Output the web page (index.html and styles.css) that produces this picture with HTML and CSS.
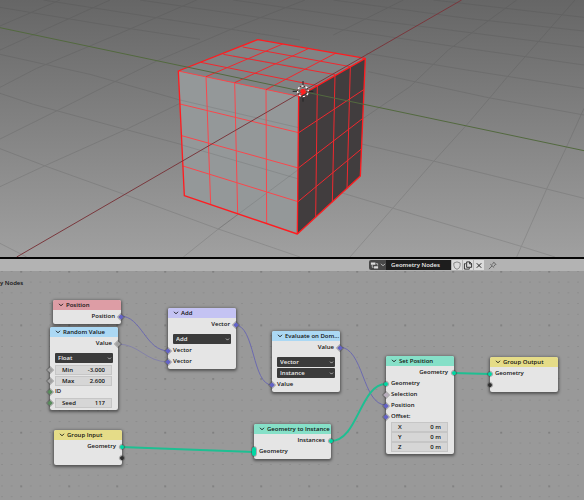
FILE: index.html
```
<!DOCTYPE html>
<html lang="en">
<head>
<meta charset="utf-8">
<title>Geometry Nodes</title>
<link rel="stylesheet" href="styles.css">
</head>
<body>
<svg class="defs" aria-hidden="true">
  <symbol id="chev" viewBox="0 0 6 4"><path d="M1 .8 3 2.8 5 .8" fill="none" stroke="currentColor" stroke-width=".9"/></symbol>
</svg>

<section class="viewport" aria-label="3D viewport">
  <svg class="scene" viewBox="0 0 1752 771" preserveAspectRatio="xMidYMid slice">
    <g class="floor">
      <path d="M0 446 133 497 375 584 655 687 900 771M0 280 100 313 375 388 550 435 900 540 1030 580 1180 625 1560 738 1665 771M0 163 270 223 540 300 900 383 1085 432 1300 483 1640 567 1752 595M0 22 300 72 600 118M1100 160 1400 210 1752 265M1105 215 1465 293 1752 345M130 0 500 58 900 120M420 0 900 70 1400 145 1752 195M700 0 1100 58 1752 142M1000 0 1400 55 1752 93M1300 0 1752 52M0 730 80 771"/>
      <path d="M0 560 135 497 385 385 540 310 800 190M1000 105 1210 0M550 771 655 687 900 505 1090 355 1230 260 1345 150 1550 0M1050 771 1178 625 1302 483 1398 377 1470 293 1520 233 1725 0M1550 771 1640 567 1700 440 1752 325M0 417 175 330 320 257 470 183 700 85 915 0M0 262 110 205 360 100 590 0M0 150 330 0M0 78 180 0"/>
    </g>
    <g transform="translate(480 60)">
      <path class="face-front" d="M55 153 416 229 412 642 73 527Z"/>
      <path class="face-top" d="M55 153 293 59 616 115 416 229Z"/>
      <path class="face-side" d="M416 229 616 115 601 468 412 642Z"/>
      <g class="floor faint">
        <path d="M60 240 416 323M66 375 416 477M175 627 416 448M220 108 430 145"/>
      </g>
      <g class="edge-soft">
        <path d="M60 252 416 338M65 347 415 444M69 438 414 545M138 170 152 552M224 188 233 581M318 209 320 610M55 153 416 229"/>
      </g>
      <g class="edge">
        <path d="M248 81 571 140M190 103 525 164M122 127 472 197M368 72 138 170M445 86 224 188M528 99 318 209"/>
        <path d="M416 338 611 209M415 444 606 297M414 545 604 387M472 197 467 592M525 164 517 547M571 140 561 507"/>
        <path class="rim" d="M416 229 412 642 73 527 55 153 293 59 616 115 601 468 412 642M416 229 616 115"/>
      </g>
    </g>
    <path class="axis-y" d="M0 83 1752 452"/>
    <path class="axis-x" d="M50 771 905 276 1385 0"/>
    <g class="cursor3d">
      <path d="M909 243V263M909 285V305M878 274H898M920 274H940"/>
      <circle class="ring" cx="909" cy="274" r="16"/>
      <circle class="dash" cx="909" cy="274" r="16"/>
      <circle class="origin" cx="909" cy="274" r="8"/>
    </g>
  </svg>
</section>

<header class="bar">
  <button class="browse" aria-label="Browse node trees">
    <svg viewBox="0 0 10 9"><path d="M1 1.200h5v2.600H1zM4.500 5.200H9v2.600H4.500z" fill="#ddd"/><path d="M2.500 4v2.500H4M6.500 2.500h2V4.500" fill="none" stroke="#ddd" stroke-width=".8"/></svg>
    <svg class="chev"><use href="#chev"/></svg>
  </button>
  <input class="tree" aria-label="Node tree name" value="Geometry Nodes">
  <div class="tools">
    <button aria-label="Fake user"><svg viewBox="0 0 11 10"><path d="M5.500 1 9 2.200V5Q9 8 5.500 9.300 2 8 2 5V2.200Z" fill="none" stroke="#777" stroke-width=".9"/></svg></button>
    <button aria-label="Duplicate"><svg viewBox="0 0 11 10"><path d="M4 1h3.500L9.500 3V7H4zM7.300 1v2.200h2.200M3 3H1.500V9H7V8" fill="none" stroke="#222"/></svg></button>
    <button aria-label="Unlink"><svg viewBox="0 0 11 10"><path d="m3 2.500 5 5M8 2.500l-5 5" stroke="#222" stroke-width="1.100"/></svg></button>
  </div>
  <button class="pin" aria-label="Pin"><svg viewBox="0 0 11 10"><path d="m6.500 1 3 3M7 1.500 5 4M9 3.500 7 6M3 3.500l4.300 3.800M5 5.500 1.500 9" fill="none" stroke="#555" stroke-width=".9"/></svg></button>
</header>

<main class="canvas">
  <svg class="dots" aria-hidden="true">
    <defs>
      <pattern id="minor" x="16.400" y="-5" width="9.600" height="10.730" patternUnits="userSpaceOnUse"><circle cx="4.800" cy="5.360" r=".6" fill="#7e7e7e"/></pattern>
      <pattern id="major" x="-2.800" y="-26" width="48" height="53.650" patternUnits="userSpaceOnUse"><circle cx="24" cy="26.800" r=".8" fill="#6c6c6c"/></pattern>
    </defs>
    <rect width="100%" height="100%" fill="url(#minor)"/>
    <rect width="100%" height="100%" fill="url(#major)"/>
  </svg>
  <p class="crumb">y Nodes</p>
  <svg class="wires" viewBox="0 271 584 229" width="584" height="229">
    <g class="vec">
      <path d="M120 316C142 316 145 351 169 351"/>
      <path class="val" d="M117 344C140 344 145 362 169 362"/>
      <path d="M235 325C255 325 252 385 272 385"/>
      <path d="M339 347C364 347 362 405 386 405"/>
    </g>
    <g class="geo">
      <path d="M121 447 254 452"/>
      <path d="M331 441C358 441 360 384 386 384"/>
      <path d="M453 373 490 374"/>
    </g>
  </svg>

  <article class="node n-position">
    <h2 class="red"><svg class="chev"><use href="#chev"/></svg>Position</h2>
    <div class="row out"><i class="sock vector"></i>Position</div>
  </article>

  <article class="node n-random">
    <h2 class="blue"><svg class="chev"><use href="#chev"/></svg>Random Value</h2>
    <div class="row out"><i class="sock float"></i>Value</div>
    <div class="pick first"><select aria-label="Data type"><option>Float</option></select><svg class="chev"><use href="#chev"/></svg></div>
    <div class="row"><i class="sock float"></i><label class="num">Min<input value="-3.000"></label></div>
    <div class="row"><i class="sock float"></i><label class="num">Max<input value="2.600"></label></div>
    <div class="row"><i class="sock int"></i>ID</div>
    <div class="row"><i class="sock int"></i><label class="num">Seed<input value="117"></label></div>
  </article>

  <article class="node n-add">
    <h2 class="violet"><svg class="chev"><use href="#chev"/></svg>Add</h2>
    <div class="row out"><i class="sock vector"></i>Vector</div>
    <div class="pick first"><select aria-label="Operation"><option>Add</option></select><svg class="chev"><use href="#chev"/></svg></div>
    <div class="row"><i class="sock vector"></i>Vector</div>
    <div class="row"><i class="sock vector"></i>Vector</div>
  </article>

  <article class="node n-evaluate">
    <h2 class="blue"><svg class="chev"><use href="#chev"/></svg>Evaluate on Dom...</h2>
    <div class="row out"><i class="sock vector"></i>Value</div>
    <div class="pick first"><select aria-label="Data type"><option>Vector</option></select><svg class="chev"><use href="#chev"/></svg></div>
    <div class="pick"><select aria-label="Domain"><option>Instance</option></select><svg class="chev"><use href="#chev"/></svg></div>
    <div class="row"><i class="sock vector"></i>Value</div>
  </article>

  <article class="node n-instance">
    <h2 class="green"><svg class="chev"><use href="#chev"/></svg>Geometry to Instance</h2>
    <div class="row out"><i class="sock geometry"></i>Instances</div>
    <div class="row"><i class="sock geometry multi"></i>Geometry</div>
  </article>

  <article class="node n-setpos">
    <h2 class="green"><svg class="chev"><use href="#chev"/></svg>Set Position</h2>
    <div class="row out"><i class="sock geometry"></i>Geometry</div>
    <div class="row"><i class="sock geometry"></i>Geometry</div>
    <div class="row"><i class="sock bool"></i>Selection</div>
    <div class="row"><i class="sock vector"></i>Position</div>
    <div class="row"><i class="sock vector"></i>Offset:</div>
    <div class="xyz">
      <label class="num">X<input value="0 m"></label>
      <label class="num">Y<input value="0 m"></label>
      <label class="num">Z<input value="0 m"></label>
    </div>
  </article>

  <article class="node n-output">
    <h2 class="yellow"><svg class="chev"><use href="#chev"/></svg>Group Output</h2>
    <div class="row"><i class="sock geometry"></i>Geometry</div>
    <div class="row"><i class="sock empty"></i></div>
  </article>

  <article class="node n-input">
    <h2 class="yellow"><svg class="chev"><use href="#chev"/></svg>Group Input</h2>
    <div class="row out"><i class="sock geometry"></i>Geometry</div>
    <div class="row out"><i class="sock empty"></i></div>
  </article>
</main>
</body>
</html>
```
FILE: styles.css
```
* { box-sizing: border-box; }

body {
  margin: 0;
  min-height: 100vh;
  display: flex;
  flex-direction: column;
  overflow: hidden;
  background: #999;
  color: #111;
  font: 600 6px/11px "Open Sans", "Noto Sans", sans-serif;
}

button, input, select {
  margin: 0;
  padding: 0;
  border: 0;
  border-radius: 0;
  background: none;
  color: inherit;
  font: inherit;
  appearance: none;
  min-width: 0;
}

svg { display: block; }
.defs { display: none; }
.chev { width: 6px; height: 4px; flex: none; }

/* 3D viewport */
.viewport {
  aspect-ratio: 584 / 257;
  background: linear-gradient(#666, #a0a0a0);
}
.scene { width: 100%; height: 100%; }
.scene path { fill: none; stroke-width: 3; }
.floor { stroke: #444; opacity: .18; }
.faint { opacity: .16; }
.scene .face-front { fill: #949899; }
.scene .face-top { fill: #818384; }
.scene .face-side { fill: #413d3e; }
.edge-soft { stroke: #f9474c; }
.edge { stroke: #f0282e; }
.scene .edge .rim { stroke: #ff1c20; stroke-width: 4; stroke-linejoin: round; }
.scene .axis-x { stroke: #7a383d; }
.scene .axis-y { stroke: #53693f; }
.cursor3d path { stroke: #222; }
.cursor3d circle { fill: none; stroke-width: 4; }
.cursor3d .ring { stroke: #fff; }
.cursor3d .dash { stroke: #5c2a2a; stroke-dasharray: 6 6.500; }
.cursor3d .origin { fill: #ff2020; stroke: none; }

/* Editor header */
.bar {
  display: flex;
  align-items: center;
  height: 14px;
  padding-left: 63.200%;
  border-top: 2px solid #050505;
  background: #b3b3b3;
}
.bar button { display: flex; align-items: center; justify-content: center; height: 10px; }
.bar button svg:first-child { width: 11px; height: 9px; }
.bar .browse { width: 17px; gap: 1px; background: #484848; color: #ccc; border-radius: 2px 0 0 2px; }
.bar .browse svg:first-child { width: 9px; }
.tree { width: 65px; height: 10px; padding-left: 5px; background: #1d1d1d; color: #eee; }
.tools { display: flex; gap: 1px; margin-left: 1px; }
.tools button { width: 10px; background: #dcdcdc; }
.pin { margin-left: 3px; }

/* Node canvas */
.canvas {
  position: relative;
  flex: 1;
  min-height: 229px;
  background: #999;
}
.dots { position: absolute; inset: 0; width: 100%; height: 100%; }
.crumb { position: relative; margin: 0; padding-top: 7px; font-size: 6px; }
.wires { position: absolute; left: 0; top: 0; fill: none; }
.vec { stroke: #6c6ab0; stroke-width: 1; }
.val { stroke: #8482a8; }
.geo { stroke: #1ebf92; stroke-width: 2; }

.node {
  position: absolute;
  width: 68px;
  padding-bottom: 2px;
  border-radius: 2px;
  background: #e5e5e5;
  box-shadow: 0 1px 3px 1px rgba(0, 0, 0, .45);
}
.n-position { left: 53px; top: 29px; }
.n-random { left: 50px; top: 56px; }
.n-add { left: 168px; top: 37px; }
.n-evaluate { left: 272px; top: 60px; }
.n-instance { left: 254px; top: 153px; width: 77px; }
.n-setpos { left: 386px; top: 85px; }
.n-output { left: 490px; top: 86px; }
.n-input { left: 54px; top: 159px; }

.node h2 {
  display: flex;
  align-items: center;
  gap: 2px;
  height: 10px;
  margin: 0 0 1px;
  padding-left: 5px;
  border-radius: 2px 2px 0 0;
  font-size: 6px;
  font-weight: 600;
  white-space: nowrap;
}
.red { background: #dd9da5; }
.blue { background: #abd8f4; }
.violet { background: #c4c3f3; }
.green { background: #86e0c8; }
.yellow { background: #e5dc88; }

.row {
  position: relative;
  display: flex;
  align-items: center;
  height: 11px;
  padding: 0 6px 0 5px;
}
.out { justify-content: flex-end; }

.sock {
  position: absolute;
  left: -2px;
  width: 4px;
  height: 4px;
  outline: 1px solid rgba(60, 60, 60, .35);
  transform: rotate(45deg);
}
.out .sock { left: auto; right: -2px; }
.vector { background: #6363c7; }
.float { background: #a1a1a1; }
.int { background: #598c5c; }
.bool { background: #b8aebc; }
.geometry { background: #00d6a3; border-radius: 2px; }
.empty { background: #2d2d2d; border-radius: 2px; }
.multi { height: 9px; transform: none; }

.pick {
  display: flex;
  align-items: center;
  height: 10px;
  margin: 0 5px 1px;
  padding-right: 1px;
  border-radius: 1px;
  background: #3b3b3b;
  color: #eee;
}
.first { margin-top: 4px; }
.pick select { flex: 1; height: 10px; padding-left: 3px; line-height: 10px; }
.pick .chev { width: 5px; height: 3px; }

.num {
  flex: 1;
  display: flex;
  align-items: center;
  justify-content: space-between;
  height: 10px;
  padding: 0 7px;
  background: #d6d6d6;
  outline: 1px solid #c6c6c6;
  outline-offset: -1px;
  line-height: 10px;
}
.num input { width: 24px; height: 10px; text-align: right; }
.xyz { display: grid; padding: 0 6px 0 5px; }
```
